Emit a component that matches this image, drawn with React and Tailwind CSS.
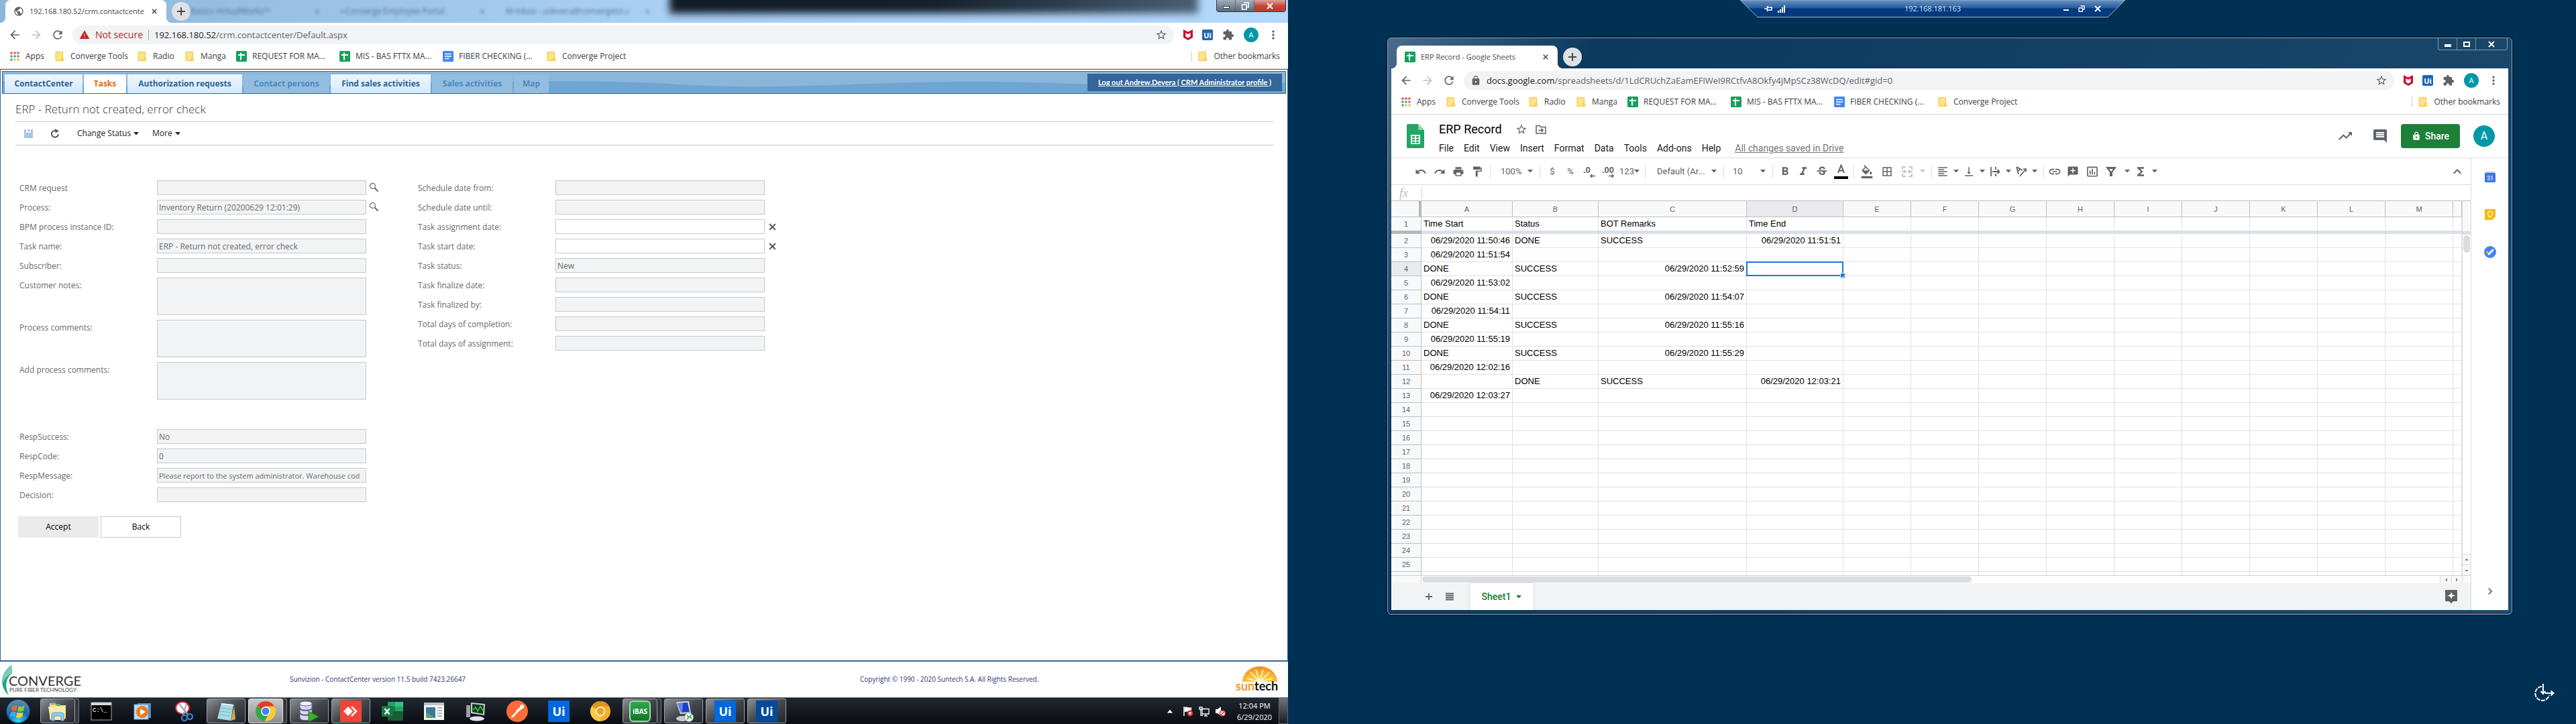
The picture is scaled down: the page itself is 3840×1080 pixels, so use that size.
import React from "react";
import {
  MdAddComment, MdArrowBack, MdArrowForward, MdBorderAll, MdExtension, MdFormatAlignLeft, MdFormatBold,
  MdFormatColorFill, MdFormatItalic, MdFormatPaint, MdFunctions, MdInsertChartOutlined, MdInsertComment,
  MdKeyboardArrowRight, MdKeyboardArrowUp, MdLink, MdLock, MdMoreVert, MdPrint, MdPublic, MdRedo, MdRefresh,
  MdStarBorder, MdStrikethroughS, MdTrendingUp, MdUndo, MdVerticalAlignBottom, MdWarning,
} from "react-icons/md";

const UI = "font-['Open_Sans','Noto_Sans',sans-serif]";

/* ---------- small drawings ---------- */

const Caret = ({ className = "text-[#5f6368]" }) => (
  <svg viewBox="0 0 8 5" className={`h-[5px] w-2 shrink-0 ${className}`} aria-hidden="true">
    <path d="M0 0h8L4 4.6z" fill="currentColor" />
  </svg>
);

const AppsIcon = () => (
  <svg viewBox="0 0 14 14" className="size-3.5">
    {["#ea4335", "#ea4335", "#ea4335", "#34a853", "#4285f4", "#4285f4", "#34a853", "#fbbc04", "#fbbc04"].map((c, i) => (
      <rect key={i} x={(i % 3) * 5 + 0.5} y={Math.floor(i / 3) * 5 + 0.5} width="3" height="3" fill={c} />
    ))}
  </svg>
);

const FolderIcon = () => (
  <svg viewBox="0 0 14 16" className="h-4 w-3.5">
    <path d="M1 1.5h10.500v8.500l1.200 1v3.500H1z" fill="#fee28d" stroke="#f3c43a" />
    <path d="M9.800 14v-3.500l1.700-.6" fill="none" stroke="#eebb33" />
  </svg>
);

const SheetsIcon = () => (
  <svg viewBox="0 0 16 16" className="size-4">
    <rect width="16" height="16" rx="1.5" fill="#16a05d" />
    <path d="M3 6h10M7 2.600v10.800" stroke="#fff" strokeWidth="2" />
  </svg>
);

const DocsIcon = () => (
  <svg viewBox="0 0 16 16" className="size-4">
    <rect width="16" height="16" rx="1.5" fill="#4285f4" />
    <path d="M3 4.500h10M3 8h10M3 11.500h6.500" stroke="#fff" strokeWidth="1.700" />
  </svg>
);

const McAfeeIcon = () => (
  <svg viewBox="0 0 14 16" className="h-4 w-3.5">
    <path d="M0 0l7 3.400L14 0v12l-7 4-7-4z" fill="#c8102e" />
    <path d="M3.400 5l3.600 2 3.600-2v5.400L7 12.400l-3.600-2z" fill="#fff" />
  </svg>
);

const UiBadge = () => (
  <span className="flex size-4 items-center justify-center rounded-[2px] bg-[#1f66b0] text-[11px] font-bold leading-none text-white">Ui</span>
);

const SearchIcon = () => (
  <svg viewBox="0 0 15 15" className="size-[15px]">
    <circle cx="5.500" cy="5.500" r="4" fill="none" stroke="#777" strokeWidth="1.300" />
    <path d="M8.500 8.500l5 5" stroke="#666" strokeWidth="2" />
  </svg>
);

const CrossIcon = ({ className }) => (
  <svg viewBox="0 0 10 10" className={className}>
    <path d="M1 1l8 8M9 1L1 9" stroke="currentColor" strokeWidth="2" />
  </svg>
);

/* ---------- browser chrome ---------- */

function TabStrip({ icon, title, children }) {
  return (
    <div className="relative flex h-[34px] items-stretch">
      <span className="size-2 self-end bg-[radial-gradient(circle_at_0_0,transparent_8px,white_8px)]" />
      <div className="flex w-60 items-center rounded-t-lg bg-white pl-3 pr-2.5">
        {icon}
        <span className="ml-2 whitespace-nowrap text-[11px] text-[#45494d]">{title}</span>
        <button aria-label="Close tab" className="ml-auto flex size-4 items-center justify-center text-[#45494d]"><CrossIcon className="size-2" /></button>
      </div>
      <span className="size-2 self-end bg-[radial-gradient(circle_at_100%_0,transparent_8px,white_8px)]" />
      <button aria-label="New tab" className="flex size-7 items-center justify-center self-center rounded-full bg-[#dee1e6] text-[#45494d]">
        <svg viewBox="0 0 12 12" className="size-3"><path d="M6 0v12M0 6h12" stroke="currentColor" strokeWidth="2" /></svg>
      </button>
      {children}
    </div>
  );
}

const BOOKMARKS = [
  [<AppsIcon />, "Apps", "w-[27px]"],
  [<FolderIcon />, "Converge Tools", "w-[83px]"],
  [<FolderIcon />, "Radio", "w-[31px]"],
  [<FolderIcon />, "Manga", "w-[37px]"],
  [<SheetsIcon />, "REQUEST FOR MA...", "w-[114px]"],
  [<SheetsIcon />, "MIS - BAS FTTX MA...", "w-[114px]"],
  [<DocsIcon />, "FIBER CHECKING (...", "w-[114px]"],
  [<FolderIcon />, "Converge Project", "w-[96px]"],
];

function BrowserBars({ lead, host, path }) {
  return (
    <div className="shrink-0 border-b border-[#d4d6d8] bg-white pb-1">
      <div className="flex h-9 items-center pl-3 pr-3 text-[#5f6368]">
        <button aria-label="Back" className="flex w-5 justify-center"><MdArrowBack className="size-5" /></button>
        <button aria-label="Forward" className="ml-3 flex w-5 justify-center text-[#bdc1c6]"><MdArrowForward className="size-5" /></button>
        <button aria-label="Reload" className="ml-3 flex w-5 justify-center"><MdRefresh className="size-5" /></button>
        <div className="ml-3 flex h-7 flex-1 items-center rounded-full bg-[#f1f3f4] pl-2.5 pr-2.5 text-sm">
          {lead}
          <a href="#url" className="whitespace-nowrap text-[13px]"><span className="text-[#202124]">{host}</span>{path}</a>
          <button aria-label="Bookmark this page" className="ml-auto"><MdStarBorder className="size-[18px]" /></button>
        </div>
        <div className="flex items-center gap-3.5 pl-3.5">
          <button aria-label="McAfee"><McAfeeIcon /></button>
          <button aria-label="UiPath"><UiBadge /></button>
          <button aria-label="Extensions"><MdExtension className="size-[18px]" /></button>
          <button aria-label="Profile" className="flex size-[22px] items-center justify-center rounded-full bg-[#0097a7] text-[11px] text-white">A</button>
          <button aria-label="Menu" className="-ml-0.5"><MdMoreVert className="size-5" /></button>
        </div>
      </div>
      <div className="flex h-7 items-center gap-4 pl-3.5 pr-3 text-xs text-[#3c4043]">
        {BOOKMARKS.map(([icon, text, w]) => (
          <a key={text} href="#bookmark" className="flex items-center gap-2">
            <span className="flex w-4 justify-center">{icon}</span>
            <span className={`whitespace-nowrap ${w}`}>{text}</span>
          </a>
        ))}
        <a href="#other" className="ml-auto flex items-center gap-2 whitespace-nowrap">
          <span className="h-4 w-px bg-[#ccc]" />
          <span className="flex w-4 justify-center"><FolderIcon /></span>
          Other bookmarks
        </a>
      </div>
    </div>
  );
}

/* ---------- CRM page ---------- */

const NAV = [
  ["ContactCenter", "w-[116px]", "on"],
  ["Tasks", "w-[63px]", "active"],
  ["Authorization requests", "w-[171px]", "on"],
  ["Contact persons", "w-32", "off"],
  ["Find sales activities", "w-[149px]", "on"],
  ["Sales activities", "w-[120px]", "off"],
  ["Map", "w-[52px]", "off"],
];

const NAV_STYLE = {
  on: "bg-linear-to-b from-[#edf7ff] to-[#d5eafb] text-[#2a6496]",
  active: "bg-white text-[#e06a10]",
  off: "bg-[#93bddf] text-[#4c8abd]",
};

const LEFT_FIELDS = [
  ["CRM request", "", "search"],
  ["Process:", "Inventory Return (20200629 12:01:29)", "search"],
  ["BPM process instance ID:", ""],
  ["Task name:", "ERP - Return not created, error check"],
  ["Subscriber:", ""],
  ["Customer notes:", "", "area"],
  ["Process comments:", "", "area"],
  ["Add process comments:", "", "area"],
];
const RESP_FIELDS = [
  ["RespSuccess:", "No"],
  ["RespCode:", "0"],
  ["RespMessage:", "Please report to the system administrator. Warehouse cod", "long"],
  ["Decision:", ""],
];
const RIGHT_FIELDS = [
  ["Schedule date from:", ""],
  ["Schedule date until:", ""],
  ["Task assignment date:", "", "clear"],
  ["Task start date:", "", "clear"],
  ["Task status:", "New"],
  ["Task finalize date:", ""],
  ["Task finalized by:", ""],
  ["Total days of completion:", ""],
  ["Total days of assignment:", ""],
];

function Field({ label, value, kind }) {
  const id = label.toLowerCase().replace(/[^a-z]+/g, "-");
  const box = "w-[312px] border border-[#c8c8c8] px-0.5 text-[#6a6a6a]";
  return (
    <div className="flex items-start">
      <label htmlFor={id} className="h-[22px] w-[205px] shrink-0 whitespace-nowrap text-xs leading-6 text-[#6a6a6a]">{label}</label>
      {kind === "area" ? (
        <textarea id={id} readOnly className={`block h-14 resize-none bg-[#f2f3f5] text-xs ${box}`} />
      ) : (
        <input
          id={id}
          readOnly
          defaultValue={value}
          className={`h-[22px] ${kind === "clear" ? "bg-white" : "bg-[#f2f3f5]"} ${kind === "long" ? "text-[11px]" : "text-xs"} ${box}`}
        />
      )}
      {kind === "search" && <button aria-label={`Search ${label}`} className="ml-1 mt-[3px]"><SearchIcon /></button>}
      {kind === "clear" && <button aria-label={`Clear ${label}`} className="ml-1.5 mt-[6px] text-[#666]"><CrossIcon className="size-[11px]" /></button>}
    </div>
  );
}

const FieldList = ({ items }) => (
  <div className="flex flex-col gap-[7px]">
    {items.map(([label, value, kind]) => <Field key={label} label={label} value={value} kind={kind} />)}
  </div>
);

function CrmPage() {
  return (
    <main className="flex flex-1 flex-col border border-b-2 border-[#336699] bg-white p-0.5">
      <nav className="relative flex h-[34px] shrink-0 items-end gap-0.5 border border-[#336699] bg-[#8ab6da] pl-[3px]">
        <svg viewBox="0 0 1912 32" preserveAspectRatio="none" className="absolute inset-0 size-full">
          <path d="M0 14C180 24 330 24 500 20S860 10 1010 19s260 -4 440 -4 200 12 462 2V32H0z" fill="#6ea5d3" />
        </svg>
        {NAV.map(([t, w, s]) => (
          <a key={t} href="#tab" className={`relative flex h-7 items-center justify-center whitespace-nowrap text-xs font-bold ${w} ${NAV_STYLE[s]}`}>{t}</a>
        ))}
        <a href="#logout" className="relative mb-[3px] ml-auto mr-[5px] flex h-[26px] w-[290px] items-center justify-center self-end whitespace-nowrap bg-[#336699] font-['Lato',sans-serif] text-[11px] font-bold text-white underline">
          Log out Andrew.Devera ( CRM Administrator profile )
        </a>
      </nav>
      <div className="ml-5 mr-[18px]">
        <h1 className="flex h-[42px] items-center border-b border-[#c8c8c8] pt-1 text-[17px] font-light text-[#333]">ERP - Return not created, error check</h1>
        <div className="flex h-[35px] items-center border-b border-[#c8c8c8] text-xs text-[#222]">
          <button aria-label="Save" className="ml-[13px]">
            <svg viewBox="0 0 13 13" className="size-[13px]"><path d="M0 0h3v5h7V0h3v13H0z" fill="#abc6df" /><path d="M4 0h5v4H4z" fill="#d4e2ef" /><path d="M6.500 0h2v3h-2z" fill="#abc6df" /></svg>
          </button>
          <button aria-label="Reload task" className="ml-[26px]">
            <svg viewBox="0 0 14 14" className="size-3.5"><path d="M10.500 4.200A5 5 0 1 0 12 8" fill="none" stroke="#555" strokeWidth="2" /><path d="M7 0l6 3.500-5.500 3z" fill="#555" /></svg>
          </button>
          <button className="ml-[26px] flex w-28 items-center gap-1 whitespace-nowrap">Change Status <Caret className="text-[#222]" /></button>
          <button className="flex items-center gap-1">More <Caret className="text-[#222]" /></button>
        </div>
      </div>
      <form className="ml-[26px] mt-[52px]" onSubmit={(e) => e.preventDefault()}>
        <div className="flex items-start">
          <div className="w-[594px]">
            <FieldList items={LEFT_FIELDS} />
            <div className="mt-11"><FieldList items={RESP_FIELDS} /></div>
          </div>
          <FieldList items={RIGHT_FIELDS} />
        </div>
        <div className="-ml-0.5 mt-[21px] flex gap-[3px] text-xs text-black">
          <button className="h-8 w-[120px] bg-[#eaeaea]">Accept</button>
          <button className="h-8 w-[120px] border border-[#c8c8c8] bg-white">Back</button>
        </div>
      </form>
    </main>
  );
}

function CrmFooter() {
  return (
    <footer className="grid h-[53px] shrink-0 grid-cols-2 items-center bg-white text-[10px] text-[#33337a]">
      <div className="flex h-full items-center">
        <svg viewBox="0 0 136 48" className="h-12 w-[136px]">
          <path d="M17 2C1 14-2 34 13 47 7 34 8 22 18 14z" fill="#1aa68c" />
          <path d="M17 2C7 11 3 20 4 30c3-9 8-13 14-16z" fill="#7cccbb" />
          <text x="13" y="33" fontSize="20" fontFamily="Lato" fill="#333">CONVERGE</text>
          <text x="14" y="42" fontSize="8" fontFamily="Lato" fill="#444">PURE FIBER TECHNOLOGY</text>
        </svg>
        <span className="ml-[296px] whitespace-nowrap">Sunvizion - ContactCenter version 11.5 build 7423.26647</span>
      </div>
      <div className="flex h-full items-center justify-between pl-[322px] pr-0.5">
        <span className="whitespace-nowrap">Copyright © 1990 - 2020 Suntech S.A. All Rights Reserved.</span>
        <svg viewBox="0 0 78 46" className="h-[46px] w-[78px]">
          <defs><radialGradient id="sun" cx="50%" cy="100%" r="100%"><stop offset="0" stopColor="#ffe34a" /><stop offset="1" stopColor="#f08a1c" /></radialGradient></defs>
          <path d="M12 26a26 23 0 0 1 52 0z" fill="url(#sun)" />
          <path d="M38 26L19 21M38 26L24 12M38 26L32 8M38 26L43 8M38 26l14-14M38 26l19-5" stroke="#fffbe0" strokeWidth="1.600" />
          <text x="2" y="39" fontSize="18" fontWeight="700" fontFamily="Lato" fill="#f39a1f">sun<tspan fill="#111">tech</tspan></text>
        </svg>
      </div>
    </footer>
  );
}

/* ---------- taskbar ---------- */

const Chrome = ({ a = "#e33b2e", b = "#2fa84f", c = "#fcc934", d = "#4285f4" }) => (
  <svg viewBox="0 0 32 32" className="size-8">
    <circle cx="16" cy="16" r="15" fill={c} />
    <path d="M16 16L3 8.500A15 15 0 0 1 29 8.500H16z" fill={a} />
    <path d="M3 8.500A15 15 0 0 0 14.500 31L20 21 16 16z" fill={b} />
    <circle cx="16" cy="16" r="7" fill="#fff" />
    <circle cx="16" cy="16" r="5.500" fill={d} />
  </svg>
);

const UiTile = ({ dark }) => (
  <span className={`flex size-8 items-center justify-center text-lg font-bold leading-none text-white ${dark ? "bg-[#04499b]" : "bg-[#0067df]"}`}>Ui</span>
);

const ICONS = {
  explorer: (
    <svg viewBox="0 0 32 32" className="size-8"><path d="M4 4h9l1 3h14v20H4z" fill="#f3d98a" /><path d="M6 3h7v3H6z" fill="#5cb0e0" /><path d="M14 5h6v3h-6z" fill="#67ad45" /><path d="M2 9h26l-2 20H5z" fill="#fbeaa8" /><path d="M7 30v-9q0-3 3-3h12q3 0 3 3v9h-4v-7H11v7z" fill="#8ecbf0" stroke="#5b9dcc" /></svg>
  ),
  cmd: (
    <svg viewBox="0 0 32 28" className="h-7 w-8"><rect x="1" y="1" width="30" height="26" fill="#000" stroke="#aaa" /><path d="M1 1h30v4H1z" fill="#d8d8d8" /><text x="3" y="15" fontSize="9" fontFamily="Liberation Mono" fill="#fff">C:\_</text></svg>
  ),
  media: (
    <svg viewBox="0 0 28 28" className="size-7"><path d="M6 2h20v22H6z" fill="#4e8fc2" /><rect x="1" y="4" width="21" height="22" fill="#bcdcf2" stroke="#6fa8d0" /><circle cx="13" cy="15" r="9" fill="#f07a18" /><path d="M10 10l8 5-8 5z" fill="#fff" /></svg>
  ),
  snip: (
    <svg viewBox="0 0 32 32" className="size-8"><ellipse cx="13" cy="11" rx="10" ry="9" fill="#fff" stroke="#d9252f" strokeWidth="2" /><path d="M8 5l14 17M19 4l-5 18" stroke="#9aa5ae" strokeWidth="2" /><circle cx="24" cy="24" r="4" fill="none" stroke="#3077c4" strokeWidth="2.500" /><circle cx="16" cy="26" r="4" fill="none" stroke="#3077c4" strokeWidth="2.500" /></svg>
  ),
  notepad: (
    <svg viewBox="0 0 32 32" className="size-8"><path d="M9 4l18 2-4 24-20-3z" fill="#a5dbe6" /><path d="M9 4l18 2 1 2-19-2z" fill="#e6f5f8" /><path d="M28 8l2 20-7 2z" fill="#cda74f" /><path d="M8 11l16 2M7 16l16 2M6 21l16 2" stroke="#75b7c6" /></svg>
  ),
  chrome: <Chrome />,
  sql: (
    <svg viewBox="0 0 34 32" className="h-8 w-[34px]"><path d="M3 4v22c0 5 18 5 18 0V4z" fill="#d8d8ee" stroke="#5a5a96" /><ellipse cx="12" cy="4.500" rx="9" ry="3.500" fill="#f4f4fb" stroke="#5a5a96" /><path d="M3 11c0 5 18 5 18 0M3 18c0 5 18 5 18 0" fill="none" stroke="#5a5a96" strokeWidth="2" /><path d="M16 16l15 8-15 8z" fill="#3fae29" stroke="#1d7a12" /></svg>
  ),
  anydesk: (
    <svg viewBox="0 0 32 32" className="size-8"><rect width="32" height="32" fill="#f04438" /><path d="M12 9l7 7-7 7-7-7z" fill="#fff" /><path d="M17 9l7 7-7 7" fill="none" stroke="#fff" strokeWidth="2.500" /></svg>
  ),
  excel: (
    <svg viewBox="0 0 32 32" className="size-8"><rect x="9" y="2" width="23" height="28" rx="1" fill="#21a366" /><path d="M9 9h11v7H9z" fill="#107c41" /><path d="M20 2h12v7H20z" fill="#33c481" /><path d="M9 16h23v14H9z" fill="#185c37" /><rect x="0" y="8" width="16" height="16" rx="1" fill="#107c41" /><path d="M4.500 12l7 8.500M11.500 12l-7 8.500" stroke="#fff" strokeWidth="2.200" /></svg>
  ),
  app: (
    <svg viewBox="0 0 30 26" className="h-[26px] w-[30px]"><rect width="30" height="26" fill="#f4f4f4" /><path d="M0 0h30v4H0z" fill="#b9c3cc" /><path d="M3 7h14v16H3z" fill="#3a7b9c" /><path d="M3 14l14 9H3z" fill="#5aa469" /><path d="M20 8h7M20 12h7M20 16h7M20 20h7" stroke="#9aa" strokeWidth="1.500" /></svg>
  ),
  vm: (
    <svg viewBox="0 0 32 32" className="size-8"><path d="M9 3l21 2-1 17-20-3z" fill="#c9cdd0" /><path d="M11 5l17 2-1 13-16-3z" fill="#123c18" /><path d="M12 14l4-4 3 6 4-7 4 6" fill="none" stroke="#35d04b" strokeWidth="1.500" /><path d="M2 7h6v18H2z" fill="#989ea3" /><ellipse cx="18" cy="27" rx="11" ry="3.500" fill="#dfe3e6" /></svg>
  ),
  postman: (
    <svg viewBox="0 0 32 32" className="size-8"><circle cx="16" cy="16" r="16" fill="#ff6c37" /><path d="M7 25l9-9M9 25l11-12" stroke="#fff" strokeWidth="1.500" /><path d="M14 15l7-6 3 3-8 6z" fill="#fff" /><circle cx="23" cy="9" r="3" fill="#fff" /></svg>
  ),
  ui: <UiTile />,
  canary: <Chrome a="#dc9419" b="#f9c846" c="#f1b12d" d="#e9a420" />,
  ibas: (
    <span className="flex size-8 items-center justify-center rounded-md border-2 border-[#9fdcaa] bg-linear-to-b from-[#2fa84a] to-[#14752c] text-[10px] font-bold leading-none text-white">iBAS</span>
  ),
  rdp: (
    <svg viewBox="0 0 32 32" className="size-8"><path d="M5 2l19-1 3 18-16 1z" fill="#d7dbe2" /><path d="M7 4l15-1 3 14-13 1z" fill="#1c3fc4" /><path d="M7 4l8-.5L14 18l-2 0z" fill="#5f84ec" /><ellipse cx="14" cy="27" rx="9" ry="4" fill="#c6cbd0" /><circle cx="24" cy="25" r="6.500" fill="#f1f5f1" stroke="#8ab" /><path d="M21 22l3 3-3 3M28 21l-3 3 3 3" fill="none" stroke="#2e9e3a" strokeWidth="1.500" /></svg>
  ),
  uidark: <UiTile dark />,
};

const TASKS = [
  ["explorer", "stack"], ["cmd"], ["media"], ["snip"], ["notepad", "open"], ["chrome", "front"], ["sql", "open"], ["anydesk", "open"],
  ["excel"], ["app"], ["vm"], ["postman"], ["ui"], ["canary"], ["ibas", "stack"], ["rdp", "open"], ["ui", "open"], ["uidark", "open"],
];

const FRAME = "rounded-[3px] border border-[#9aa0a6] bg-linear-to-br from-[#8d9196] via-[#44484d] to-[#23272b]";

function TaskButton({ name, state }) {
  const stacked = state === "stack" || state === "front";
  return (
    <div className="flex h-full w-[58px] items-stretch py-px">
      <button
        aria-label={name}
        className={`flex items-center justify-center ${stacked ? "w-[52px]" : "w-full"} ${
          state === "front" ? "rounded-[3px] border border-[#e6e6e6] bg-linear-to-b from-[#c9c9c9] to-[#8b8d8f]" : state ? FRAME : ""
        }`}
      >
        {ICONS[name]}
      </button>
      {stacked && <span className="w-1.5 rounded-r-[3px] border border-l-0 border-[#777c82] bg-[#33373c]" />}
    </div>
  );
}

function Taskbar() {
  return (
    <div className="flex h-10 shrink-0 items-center border-t border-[#7d8794] bg-linear-to-b from-[#222831] to-[#0a0d12] text-white">
      <button aria-label="Start" className="ml-2 mr-3.5">
        <svg viewBox="0 0 38 38" className="size-[38px]">
          <defs><radialGradient id="orb" cx="50%" cy="90%" r="90%"><stop offset="0" stopColor="#35d3ff" /><stop offset=".5" stopColor="#1668a8" /><stop offset="1" stopColor="#6b8fb0" /></radialGradient></defs>
          <circle cx="19" cy="19" r="17.500" fill="url(#orb)" stroke="#0c3a63" />
          <path d="M10 12q4-3 8-1l-1.500 8q-4-2-8 0z" fill="#f0652b" />
          <path d="M19.500 11q4 2 9-.5L27 18.500q-5 2-9 .5z" fill="#8fc63f" />
          <path d="M8 20.500q4-2 8 0l-1.500 7q-4-2-8 .5z" fill="#3fa9f0" />
          <path d="M17.500 20.500q4 2 9 0L25 27.500q-5 2.500-9 .5z" fill="#ffcf2f" />
        </svg>
      </button>
      <div className="flex h-full gap-1">
        {TASKS.map(([name, state], i) => <TaskButton key={i} name={name} state={state} />)}
      </div>
      <div className="ml-auto flex h-full items-center">
        <svg viewBox="0 0 8 5" className="mr-[15px] h-1.5 w-2"><path d="M4 0l4 5H0z" fill="#fff" /></svg>
        <svg viewBox="0 0 16 16" className="mr-2 size-4"><path d="M2 1v14" stroke="#fff" strokeWidth="1.500" /><path d="M3 2q3-1 5 0t5 0v7q-3 1-5 0t-5 0z" fill="#fff" /><circle cx="11" cy="11" r="4.500" fill="#d62b2b" /><path d="M9.300 9.300l3.400 3.400M12.700 9.300l-3.400 3.400" stroke="#fff" strokeWidth="1.300" /></svg>
        <svg viewBox="0 0 16 16" className="mr-2 size-4"><path d="M5 4.500h10v7.500H5zM8 15h5M10.500 12v3M1 2h4v3H1zM3 5v9h3" fill="none" stroke="#fff" strokeWidth="1.300" /></svg>
        <svg viewBox="0 0 16 16" className="mr-[15px] size-4"><path d="M1 5h3l5-4v14l-5-4H1z" fill="#fff" /><circle cx="11.500" cy="11" r="4" fill="#fff" stroke="#d62b2b" strokeWidth="1.600" /><path d="M9 13.500l5-5" stroke="#d62b2b" strokeWidth="1.500" /></svg>
        <div className="w-[56px] whitespace-nowrap text-center text-[11px] leading-[17px]">12:04 PM<br />6/29/2020</div>
        <button aria-label="Show desktop" className="ml-2 h-full w-3.5 border border-[#5d646c] bg-linear-to-b from-[#6d747b] to-[#1b1f24]" />
      </div>
    </div>
  );
}

function GhostTab({ text, w }) {
  return (
    <span className={`flex items-center justify-between whitespace-nowrap ${w}`}>
      {text}<span>x</span>
    </span>
  );
}

function LeftScreen() {
  return (
    <section className="flex min-w-0 flex-1 flex-col bg-white">
      <div className="relative overflow-hidden bg-linear-to-r from-[#8eb4d8] via-[#a9cff3] to-[#b4d8fa]">
        <div className="absolute -top-6 left-[52%] right-[7%] h-11 bg-linear-to-r from-[#101c28] via-[#16202c] to-[#4a6076] blur-[6px]" />
        <TabStrip
          icon={<MdPublic className="size-4 text-[#5f6368]" />}
          title="192.168.180.52/crm.contactcente"
        >
          <div className="flex flex-1 gap-8 text-xs text-[#2f4f74] opacity-70 blur-[2px]" aria-hidden="true">
            <GhostTab text="Basics VirtualWorks™" w="w-48" />
            <GhostTab text="▪ Converge Employee Portal" w="w-[214px]" />
            <GhostTab text="M Inbox - adevera@convergeict.c" w="w-[214px]" />
          </div>
          <div className="relative mr-[3px] flex h-[18px] overflow-hidden rounded-b-[4px] border border-t-0 border-[#2f3c4a] text-white">
            <button aria-label="Minimize" className="flex w-7 items-end justify-center border-r border-[#55636f] bg-linear-to-b from-[#a4afbb] to-[#5a6876] pb-1"><span className="h-1 w-2.5 border border-[#444] bg-white" /></button>
            <button aria-label="Restore" className="flex w-7 items-center justify-center border-r border-[#55636f] bg-linear-to-b from-[#a4afbb] to-[#5a6876]">
              <svg viewBox="0 0 12 12" className="size-3"><path d="M4 1h7v7H8M1.500 4h6.500v7H1.500z" fill="none" stroke="#fff" strokeWidth="1.600" /></svg>
            </button>
            <button aria-label="Close" className="flex w-[46px] items-center justify-center bg-linear-to-b from-[#d8a69c] via-[#c9473a] to-[#b93a24]"><CrossIcon className="size-2.5" /></button>
          </div>
        </TabStrip>
      </div>
      <BrowserBars
        host="192.168.180.52"
        path="/crm.contactcenter/Default.aspx"
        lead={
          <span className="mr-2 flex items-center gap-2 whitespace-nowrap border-r border-[#9aa0a6] pr-2 text-[#c5221f] leading-4">
            <MdWarning className="size-4" />Not secure
          </span>
        }
      />
      <CrmPage />
      <CrmFooter />
      <Taskbar />
    </section>
  );
}

/* ---------- Google Sheets ---------- */

const MENUS = ["File", "Edit", "View", "Insert", "Format", "Data", "Tools", "Add-ons", "Help"];

const Sep = () => <span className="mx-[5px] h-5 w-px shrink-0 bg-[#dadce0]" />;

const Tool = ({ label, w = "w-7", children }) => (
  <button aria-label={label} className={`flex shrink-0 items-center justify-center ${w}`}>{children}</button>
);

const DropTool = ({ label, w = "w-[22px]", children, dim }) => (
  <button aria-label={label} className={`flex shrink-0 items-center ${dim ? "text-[#c4c7c9]" : ""}`}>
    <span className={`flex justify-center ${w}`}>{children}</span>
    <span className="flex w-[17px] justify-center"><Caret className={dim ? "text-[#c4c7c9]" : "text-[#5f6368]"} /></span>
  </button>
);

const Drop = ({ label, value, w }) => (
  <label className="flex shrink-0 items-center">
    <select aria-label={label} defaultValue={value} className={`appearance-none bg-transparent ${w}`}><option>{value}</option></select>
    <span className="flex w-[18px] justify-center"><Caret /></span>
  </label>
);

const Decimals = ({ text, d }) => (
  <svg viewBox="0 0 20 20" className="size-5">
    <text x="1" y="12" fontSize="13" fontWeight="700" fontFamily="Liberation Sans" fill="#5f6368">{text}</text>
    <path d={d} stroke="#5f6368" strokeWidth="1.500" fill="none" />
  </svg>
);

function SheetToolbar() {
  return (
    <div className="flex h-10 shrink-0 items-center overflow-hidden border-b border-[#dadce0] pl-[30px] text-[13px] text-[#5f6368]">
      <Tool label="Undo"><MdUndo className="size-[18px]" /></Tool>
      <Tool label="Redo"><MdRedo className="size-[18px]" /></Tool>
      <Tool label="Print"><MdPrint className="size-[18px]" /></Tool>
      <Tool label="Paint format"><MdFormatPaint className="size-[18px]" /></Tool>
      <Sep />
      <Drop label="Zoom" value="100%" w="w-[45px] pl-2.5" />
      <Sep />
      <Tool label="Currency" w="w-[26px]">$</Tool>
      <Tool label="Percent">%</Tool>
      <Tool label="Fewer decimals"><Decimals text=".0" d="M19 16.500h-7M14.500 14l-2.500 2.500 2.500 2.500" /></Tool>
      <Tool label="More decimals"><Decimals text=".00" d="M11 16.500h7M15.500 14l2.500 2.500-2.500 2.500" /></Tool>
      <button className="flex w-9 shrink-0 items-center justify-center">123<Caret /></button>
      <Sep />
      <Drop label="Font" value="Default (Ar..." w="w-[88px] pl-3" />
      <Sep />
      <Drop label="Font size" value="10" w="w-11 pl-2" />
      <Sep />
      <Tool label="Bold" w="w-[26px]"><MdFormatBold className="size-5" /></Tool>
      <Tool label="Italic"><MdFormatItalic className="size-5" /></Tool>
      <Tool label="Strikethrough"><MdStrikethroughS className="size-5" /></Tool>
      <Tool label="Text color">
        <svg viewBox="0 0 21 22" className="h-[22px] w-[21px]"><path d="M6 13L10.500 1.500 15 13M7.500 9.500h6" fill="none" stroke="#5f6368" strokeWidth="2" /><path d="M0 18h21v4H0z" fill="#000" /></svg>
      </Tool>
      <Sep />
      <Tool label="Fill color"><MdFormatColorFill className="size-5" /></Tool>
      <Tool label="Borders" w="w-8"><MdBorderAll className="size-[18px]" /></Tool>
      <DropTool label="Merge cells" w="w-7" dim>
        <svg viewBox="0 0 18 18" className="size-[18px]"><path d="M2 6V2h5M11 2h5v4M2 12v4h5M11 16h5v-4M1 9h5M17 9h-5M4.500 7L7 9l-2.500 2M13.500 7L11 9l2.500 2" fill="none" stroke="currentColor" strokeWidth="2" /></svg>
      </DropTool>
      <Sep />
      <DropTool label="Horizontal align"><MdFormatAlignLeft className="size-[18px]" /></DropTool>
      <DropTool label="Vertical align"><MdVerticalAlignBottom className="size-[18px]" /></DropTool>
      <DropTool label="Text wrapping">
        <svg viewBox="0 0 18 18" className="size-[18px]"><path d="M3 2v14M10 2v4M10 12v4M5 9h10M12.500 6l3 3-3 3" fill="none" stroke="currentColor" strokeWidth="1.800" /></svg>
      </DropTool>
      <DropTool label="Text rotation">
        <svg viewBox="0 0 18 18" className="size-[18px]"><path d="M2 2l3 11M2 2l9 5M4 8l4-3M7 16L16 5M16 9V5h-4" fill="none" stroke="currentColor" strokeWidth="1.700" /></svg>
      </DropTool>
      <Sep />
      <Tool label="Insert link" w="w-[22px]"><MdLink className="size-5" /></Tool>
      <Tool label="Insert comment" w="w-8"><MdAddComment className="size-[18px] -scale-x-100" /></Tool>
      <Tool label="Insert chart" w="w-[26px]"><MdInsertChartOutlined className="size-5" /></Tool>
      <DropTool label="Filter" w="w-[30px]">
        <svg viewBox="0 0 18 18" className="size-[18px]"><path d="M1 2h16l-6 8v6H7v-6z" fill="currentColor" /><path d="M6 5h6l-3 4z" fill="#fff" /></svg>
      </DropTool>
      <DropTool label="Functions" w="w-6"><MdFunctions className="size-5" /></DropTool>
      <button aria-label="Hide menus" className="ml-auto mr-2"><MdKeyboardArrowUp className="size-6" /></button>
    </div>
  );
}

const COLS = [
  ["A", "w-[136px]"], ["B", "w-32"], ["C", "w-[221px]"], ["D", "w-36"], ["E", "w-[101px]"], ["F", "w-[101px]"], ["G", "w-[101px]"],
  ["H", "w-[101px]"], ["I", "w-[101px]"], ["J", "w-[101px]"], ["K", "w-[101px]"], ["L", "w-[101px]"], ["M", "w-[101px]"], ["", ""],
];

const DATA = {
  2: ["06/29/2020 11:50:46", "DONE", "SUCCESS", "06/29/2020 11:51:51"],
  3: ["06/29/2020 11:51:54"],
  4: ["DONE", "SUCCESS", "06/29/2020 11:52:59"],
  5: ["06/29/2020 11:53:02"],
  6: ["DONE", "SUCCESS", "06/29/2020 11:54:07"],
  7: ["06/29/2020 11:54:11"],
  8: ["DONE", "SUCCESS", "06/29/2020 11:55:16"],
  9: ["06/29/2020 11:55:19"],
  10: ["DONE", "SUCCESS", "06/29/2020 11:55:29"],
  11: ["06/29/2020 12:02:16"],
  12: ["", "DONE", "SUCCESS", "06/29/2020 12:03:21"],
  13: ["06/29/2020 12:03:27"],
};

const ROW_HEAD = "border-r border-[#c0c0c0] p-0 text-center text-[11px] font-normal text-[#5f6368]";

function Grid() {
  return (
    <table className="w-full table-fixed border-separate border-spacing-0 font-['Liberation_Sans',Arial,sans-serif] text-[13px] leading-5 text-black">
      <colgroup>
        <col className="w-[45px]" />
        {COLS.map(([c, w], i) => <col key={i} className={w} />)}
      </colgroup>
      <thead>
        <tr className="h-6 bg-[#f8f9fa]">
          <th className="border-b border-r-4 border-[#b7b7b7] border-b-[#c0c0c0] p-0" />
          {COLS.map(([c], i) => (
            <th key={i} className={`border-b border-r border-[#c0c0c0] p-0 text-[11px] font-normal text-[#5f6368] ${c === "D" ? "bg-[#e8eaed]" : ""}`}>{c}</th>
          ))}
        </tr>
      </thead>
      <tbody>
        <tr className="h-5">
          <th className={`bg-[#f8f9fa] ${ROW_HEAD}`}>1</th>
          {COLS.map((_, i) => (
            <td key={i} className="whitespace-nowrap border-r border-[#e1e1e1] p-0 pl-[3px]">{["Time Start", "Status", "BOT Remarks", "Time End"][i]}</td>
          ))}
        </tr>
        <tr className="h-[5px]">
          <td className="bg-[#b7b7b7] p-0" />
          <td colSpan={14} className="bg-[#dadfe8] p-0" />
        </tr>
        {Array.from({ length: 25 }, (_, k) => k + 2).map((n) => (
          <tr key={n} className="h-[21px]">
            <th className={`border-b ${ROW_HEAD} ${n === 4 ? "bg-[#e8eaed]" : "bg-[#f8f9fa]"}`}>{n < 26 ? n : ""}</th>
            {COLS.map(([c], i) => {
              const v = (DATA[n] || [])[i] || "";
              const selected = n === 4 && c === "D";
              return (
                <td key={i} className={`relative whitespace-nowrap border-b border-r border-[#e1e1e1] p-0 px-[3px] ${v.includes("/") ? "text-right" : ""}`}>
                  {v}
                  {selected && (
                    <span className="absolute -inset-px border-2 border-[#1a73e8]">
                      <span className="absolute -bottom-1 -right-1 size-1.5 bg-[#1a73e8] outline outline-white" />
                    </span>
                  )}
                </td>
              );
            })}
          </tr>
        ))}
      </tbody>
    </table>
  );
}

const ScrollArrow = ({ d, label, className }) => (
  <button aria-label={label} className={`flex items-center justify-center border-[#d9d9d9] bg-[#f8f8f8] ${className}`}>
    <svg viewBox="0 0 6 6" className="size-1.5"><path d={d} fill="#888" /></svg>
  </button>
);

function SheetBody() {
  return (
    <div className="flex min-w-0 flex-1 flex-col">
      <SheetToolbar />
      <div className="flex h-[23px] shrink-0 items-center pl-3">
        <span className="w-[33px] font-['Liberation_Serif',serif] text-lg italic leading-5 text-[#bbb]">fx</span>
        <input aria-label="Formula" className="h-[18px] min-w-0 flex-1 border-l border-[#ccc] bg-white px-1 text-xs outline-none" />
      </div>
      <div className="flex min-h-0 flex-1 border-t border-[#c0c0c0]">
        <div className="min-w-0 flex-1 overflow-hidden"><div className="h-0"><Grid /></div></div>
        <div className="flex w-[13px] flex-col border-l border-[#d9d9d9]">
          <div className="h-[45px] bg-[#f8f8f8]" />
          <div className="h-[5px] bg-[#dadfe8]" />
          <div className="mx-px mt-px h-[26px] rounded-full bg-[#dadce0]" />
          <ScrollArrow label="Scroll up" className="mt-auto h-4 w-full border-t" d="M3 1l3 3H0z" />
          <ScrollArrow label="Scroll down" className="h-4 w-full border-t" d="M0 2h6L3 5z" />
        </div>
      </div>
      <div className="flex h-3 shrink-0 border-t border-[#d0d0d0]">
        <div className="w-[45px] border-r border-[#ddd] bg-[#f8f8f8]" />
        <div className="flex-1 p-px"><div className="h-[9px] w-[54%] rounded-full bg-[#dadce0]" /></div>
        <ScrollArrow label="Scroll left" className="w-[17px] border-l" d="M5 0v6L2 3z" />
        <ScrollArrow label="Scroll right" className="w-4 border-l" d="M1 0v6l3-3z" />
        <div className="w-[13px] border-l border-[#d9d9d9] bg-[#f8f8f8]" />
      </div>
      <div className="flex h-10 shrink-0 items-center bg-[#f1f3f4] text-[#5f6368]">
        <button aria-label="Add sheet" className="ml-[51px]"><svg viewBox="0 0 10 10" className="size-2.5"><path d="M5 0v10M0 5h10" stroke="currentColor" strokeWidth="1.800" /></svg></button>
        <button aria-label="All sheets" className="ml-5"><svg viewBox="0 0 12 12" className="size-3"><path d="M0 1.500h12M0 4.500h12M0 7.500h12M0 10.500h12" stroke="currentColor" strokeWidth="1.800" /></svg></button>
        <button className="ml-6 flex h-full w-[95px] items-center justify-center gap-2 bg-white text-sm font-medium text-[#188038] shadow-[0_0_2px_rgba(0,0,0,0.3)]">
          Sheet1 <Caret className="text-[#188038]" />
        </button>
        <button aria-label="Explore" className="ml-auto mr-5">
          <svg viewBox="0 0 18 20" className="h-5 w-[18px]"><path d="M1 0h16q1 0 1 1v15q0 1-1 1h-5l-3 3-3-3H1q-1 0-1-1V1q0-1 1-1z" fill="#616161" /><path d="M9 3l1.500 4L15 8.500 10.500 10 9 14 7.500 10 3 8.500 7.500 7z" fill="#fff" /></svg>
        </button>
      </div>
    </div>
  );
}

function SheetsPage() {
  return (
    <div className="flex min-h-0 flex-1 flex-col bg-white font-['Roboto',sans-serif]">
      <header className="flex h-[65px] shrink-0 items-start border-b border-[#dadce0] pl-[23px] pr-5">
        <svg viewBox="0 0 26 36" className="mt-3.5 h-9 w-[26px]">
          <path d="M2 0h15l9 9v25q0 2-2 2H2q-2 0-2-2V2q0-2 2-2z" fill="#23a566" />
          <path d="M17 0l9 9h-9z" fill="#8ed1b1" />
          <path d="M6 16h14v14H6z" fill="#fff" />
          <path d="M8 18h4v2.500H8zM14 18h4v2.500h-4zM8 22h4v2.500H8zM14 22h4v2.500h-4zM8 26h4v2.500H8zM14 26h4v2.500h-4z" fill="#23a566" />
        </svg>
        <div className="ml-[22px] mt-2.5">
          <div className="flex h-6 items-center text-[#5f6368]">
            <h1 className="text-lg text-black">ERP Record</h1>
            <button aria-label="Star" className="ml-5"><MdStarBorder className="size-[18px]" /></button>
            <button aria-label="Move" className="ml-3">
              <svg viewBox="0 0 16 14" className="h-3.5 w-4"><path d="M1 1.500h5l1.500 2H15v9.500H1zM4.500 8.200H11M8.500 5.500l2.700 2.700-2.700 2.700" fill="none" stroke="currentColor" strokeWidth="1.500" /></svg>
            </button>
          </div>
          <div className="mt-1 flex h-6 items-center gap-[15px] whitespace-nowrap text-sm text-[#202124]">
            {MENUS.map((m) => <button key={m}>{m}</button>)}
            <a href="#saved" className="ml-1.5 text-[#757575] underline">All changes saved in Drive</a>
          </div>
        </div>
        <div className="ml-auto mt-3.5 flex h-9 items-center text-[#5f6368]">
          <button aria-label="Activity"><MdTrendingUp className="size-6" /></button>
          <button aria-label="Comments" className="ml-7"><MdInsertComment className="size-6" /></button>
          <button className="ml-[19px] flex h-9 w-[88px] items-center justify-center gap-1.5 rounded bg-[#1e8038] text-sm font-medium text-white"><MdLock className="size-3.5" />Share</button>
          <button aria-label="Account" className="ml-5 flex size-8 items-center justify-center rounded-full bg-[#0097a7] text-base text-white">A</button>
        </div>
      </header>
      <div className="flex min-h-0 flex-1">
        <SheetBody />
        <aside className="flex w-14 shrink-0 flex-col items-center border-l border-[#dadce0] pb-[18px] pt-5">
          <button aria-label="Calendar">
            <svg viewBox="0 0 16 16" className="size-4"><path d="M1 0h14v3H1z" fill="#c0c4c9" /><rect y="2" width="16" height="14" rx="1" fill="#3a76e8" /><text x="8" y="12.500" textAnchor="middle" fontSize="9" fontFamily="Roboto" fill="#fff">31</text></svg>
          </button>
          <button aria-label="Keep" className="mt-10">
            <svg viewBox="0 0 16 16" className="size-4"><path d="M1 0h14q1 0 1 1v10l-5 5H1q-1 0-1-1V1q0-1 1-1z" fill="#fbb605" /><path d="M6.200 9.500a3.500 3.500 0 1 1 3.600 0v2H6.200z" fill="none" stroke="#fff" strokeWidth="1.200" /></svg>
          </button>
          <button aria-label="Tasks" className="mt-[39px]">
            <svg viewBox="0 0 18 18" className="size-[18px]"><circle cx="9" cy="9" r="9" fill="#4384f5" /><path d="M7 12l6-6" stroke="#fff" strokeWidth="3" strokeLinecap="round" /><circle cx="4.500" cy="9.300" r="1.700" fill="#fbbc04" /></svg>
          </button>
          <button aria-label="Show side panel" className="mt-auto text-[#5f6368]"><MdKeyboardArrowRight className="size-5" /></button>
        </aside>
      </div>
    </div>
  );
}

function ConnectionBar() {
  return (
    <div className="absolute left-[674px] top-0 flex h-[26px] w-[574px] items-center px-9 text-[11px] text-[#d5e0ee]">
      <svg viewBox="0 0 574 26" preserveAspectRatio="none" className="absolute inset-0 size-full">
        <defs><linearGradient id="bar" x1="0" y1="0" x2="0" y2="1"><stop offset="0" stopColor="#6a93c2" /><stop offset=".46" stopColor="#265c9d" /><stop offset=".5" stopColor="#053a80" /><stop offset="1" stopColor="#063a7e" /></linearGradient></defs>
        <path d="M0 0h574l-26 25.500H26z" fill="url(#bar)" stroke="#9db4cf" />
      </svg>
      <button aria-label="Pin" className="relative"><svg viewBox="0 0 12 10" className="h-2.5 w-3"><path d="M0 5h4M4.500 1v8M5 3h6v4H5" fill="none" stroke="#fff" strokeWidth="1.600" /></svg></button>
      <svg viewBox="0 0 12 12" className="relative ml-2 size-3"><path d="M1 12V9M4 12V7M7 12V4M10 12V1" stroke="#fff" strokeWidth="2" /></svg>
      <span className="relative flex-1 pl-6 text-center">192.168.181.163</span>
      <div className="relative flex items-center gap-3.5 text-white">
        <button aria-label="Minimize connection" className="mt-1 h-0.5 w-2 bg-white" />
        <button aria-label="Restore connection"><svg viewBox="0 0 10 10" className="size-2.5"><path d="M3.500 1H9v5H7M1 4h5.500v5H1z" fill="none" stroke="#fff" strokeWidth="1.300" /></svg></button>
        <button aria-label="Close connection"><CrossIcon className="size-2.5" /></button>
      </div>
    </div>
  );
}

function RightScreen() {
  return (
    <section className="relative min-w-0 flex-1 bg-[#003155]">
      <ConnectionBar />
      <div className="absolute bottom-[163px] left-[148px] right-[95px] top-14 flex flex-col rounded-md border border-[#8ba3b7] bg-linear-[115deg] from-[#476b8b] via-[#0b395f] via-15% to-[#1d4a6e] px-[5px] pb-1.5 shadow-[0_0_2px_1px_rgba(0,10,25,0.8)]">
        <div className="flex h-[45px] shrink-0 items-start">
          <div className="mt-[11px]">
            <TabStrip icon={<SheetsIcon />} title="ERP Record - Google Sheets" />
          </div>
          <div className="ml-auto mr-px flex h-[18px] rounded-b-[4px] border border-t-0 border-[#8299ad] text-white">
            <button aria-label="Minimize" className="flex w-7 items-end justify-center border-r border-[#6d879e] pb-1"><span className="h-1 w-2.5 bg-white" /></button>
            <button aria-label="Maximize" className="flex w-7 items-center justify-center border-r border-[#6d879e]"><span className="h-2 w-2.5 border-2 border-white" /></button>
            <button aria-label="Close" className="flex w-[46px] items-center justify-center"><CrossIcon className="size-2.5" /></button>
          </div>
        </div>
        <BrowserBars
          host="docs.google.com"
          path="/spreadsheets/d/1LdCRUchZaEamEFiWeI9RCtfvA8Okfy4jMpSCz38WcDQ/edit#gid=0"
          lead={<MdLock className="mr-2 size-4 shrink-0" />}
        />
        <SheetsPage />
      </div>
      <svg viewBox="0 0 32 28" className="absolute bottom-8 right-8 h-7 w-8">
        <path d="M13 4A10.500 10.500 0 1 0 24 17" fill="none" stroke="#fff" strokeWidth="2" strokeDasharray="6 1.500" />
        <path d="M15 0v14M11.500 11l3.500 4 3.500-4M18 14h12M26.500 10.500l4 3.500-4 3.500" fill="none" stroke="#fff" strokeWidth="2" />
      </svg>
    </section>
  );
}

export default function App() {
  return (
    <div className={`flex h-screen w-full overflow-hidden ${UI}`}>
      <LeftScreen />
      <RightScreen />
    </div>
  );
}
